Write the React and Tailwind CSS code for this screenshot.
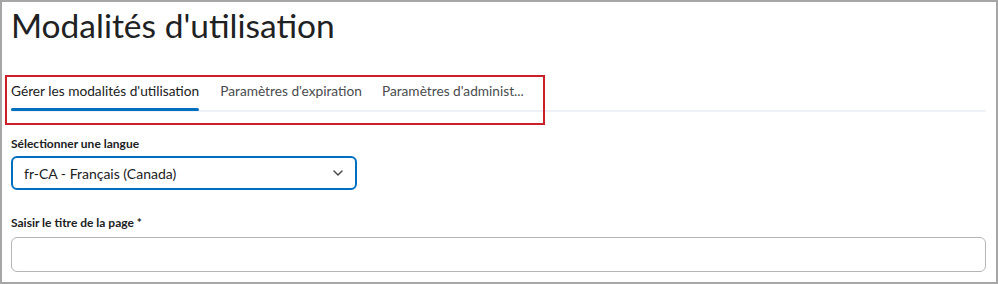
import React from 'react';

export default function App() {
  return (
    <div className="w-[998px] h-[284px] bg-white border-2 border-[#a6a6a6] relative overflow-hidden font-['Lato',sans-serif] text-[#202122]">
      <div className="pl-[9px] pr-[10px]">
        {/* Title */}
        <h1 className="text-[33.5px] leading-[40px] pt-[3px] font-normal">Modalités d'utilisation</h1>

        {/* Tabs */}
        <div className="mt-[27px] flex border-b-2 border-[#eef1f6]">
          <div className="pt-[9px] pb-[9px] text-[13.7px] leading-[20px] text-[#202122] relative">
            Gérer les modalités d'utilisation
            <span className="absolute left-0 right-0 bottom-[-1px] h-[3px] rounded-full bg-[#006fbf]"></span>
          </div>
          <div className="ml-[21px] pt-[9px] pb-[9px] text-[13.7px] leading-[20px] text-[#494c4e]">Paramètres d'expiration</div>
          <div className="ml-[20px] pt-[9px] pb-[9px] text-[13.7px] leading-[20px] text-[#494c4e]">Paramètres d'administ...</div>
        </div>

        {/* Language select */}
        <div className="mt-[24px] text-[12px] font-bold leading-[16px]">Sélectionner une langue</div>
        <div className="mt-[4px] w-[346px] h-[34px] border-2 border-[#006fbf] rounded-[6px] flex items-center justify-between pl-[11px] pr-[12px]">
          <span className="text-[14px] text-[#202122]">fr-CA - Français (Canada)</span>
          <svg width="10" height="6" viewBox="0 0 10 6" fill="none">
            <path d="M1 1l4 4 4-4" stroke="#494c4e" strokeWidth="1.5" strokeLinecap="round" strokeLinejoin="round" />
          </svg>
        </div>

        {/* Page title input */}
        <div className="mt-[25px] text-[12px] font-bold leading-[16px]">Saisir le titre de la page *</div>
        <div className="mt-[6px] w-[975px] h-[35px] border border-[#b3b6b9] rounded-[6px]"></div>
      </div>

      {/* Annotation box */}
      <div className="absolute left-[3px] top-[73px] w-[540px] h-[50px] border-2 border-[#cc1f2a] pointer-events-none"></div>
    </div>
  );
}
